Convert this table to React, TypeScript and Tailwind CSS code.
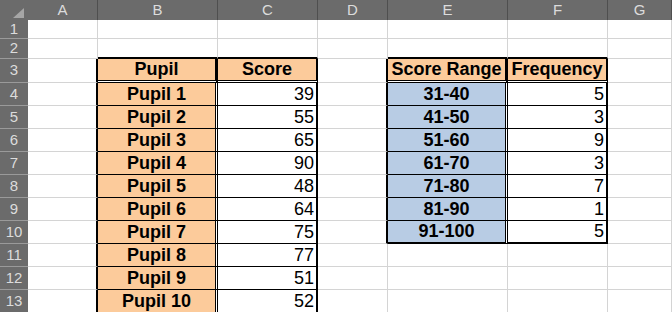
import React from "react";

const COLS = ["A", "B", "C", "D", "E", "F", "G"];

const pupils: [string, number][] = [
  ["Pupil 1", 39],
  ["Pupil 2", 55],
  ["Pupil 3", 65],
  ["Pupil 4", 90],
  ["Pupil 5", 48],
  ["Pupil 6", 64],
  ["Pupil 7", 75],
  ["Pupil 8", 77],
  ["Pupil 9", 51],
  ["Pupil 10", 52],
];

const ranges: [string, number][] = [
  ["31-40", 5],
  ["41-50", 3],
  ["51-60", 9],
  ["61-70", 3],
  ["71-80", 7],
  ["81-90", 1],
  ["91-100", 5],
];

// col: 1=A ... 7=G, row: 1..13
const rightBorder = (col: number, row: number) => {
  if (col === 1 && row >= 3) return "border-r-2 border-r-black";
  if (col === 2 && row === 3) return "border-r-[3px] border-r-black";
  if (col === 2 && row >= 4) return "border-r-[3px] border-r-black [border-right-style:double]";
  if (col === 3 && row >= 3) return "border-r-2 border-r-black";
  if (col === 4 && row >= 3 && row <= 10) return "border-r-2 border-r-black";
  if (col === 5 && row === 3) return "border-r-[3px] border-r-black";
  if (col === 5 && row >= 4 && row <= 10) return "border-r-[3px] border-r-black [border-right-style:double]";
  if (col === 6 && row >= 3 && row <= 10) return "border-r-2 border-r-black";
  return "border-r border-r-[#d4d4d4]";
};

const bottomBorder = (col: number, row: number) => {
  const left = col === 2 || col === 3;
  const right = col === 5 || col === 6;
  if ((left || right) && row === 2) return "border-b-2 border-b-black";
  if ((left || right) && row === 3) return "border-b-[3px] border-b-black [border-bottom-style:double]";
  if (left && row >= 4) return "border-b border-b-black";
  if (right && row >= 4 && row <= 9) return "border-b border-b-black";
  if (right && row === 10) return "border-b-2 border-b-black";
  return "border-b border-b-[#d4d4d4]";
};

const cellContent = (col: number, row: number) => {
  if (row === 3) {
    if (col === 2) return { text: "Pupil", bg: "bg-[#fccb9b]", bold: true, right: false };
    if (col === 3) return { text: "Score", bg: "bg-[#fccb9b]", bold: true, right: false };
    if (col === 5) return { text: "Score Range", bg: "bg-[#fccb9b]", bold: true, right: false };
    if (col === 6) return { text: "Frequency", bg: "bg-[#fccb9b]", bold: true, right: false };
  }
  if (row >= 4 && row <= 13) {
    const p = pupils[row - 4];
    if (col === 2) return { text: p[0], bg: "bg-[#fccb9b]", bold: true, right: false };
    if (col === 3) return { text: String(p[1]), bg: "bg-white", bold: false, right: true };
  }
  if (row >= 4 && row <= 10) {
    const r = ranges[row - 4];
    if (col === 5) return { text: r[0], bg: "bg-[#b8cce4]", bold: true, right: false };
    if (col === 6) return { text: String(r[1]), bg: "bg-white", bold: false, right: true };
  }
  return null;
};

const Corner = () => (
  <div className="bg-[#6b6b6b] flex items-end justify-end pr-[4px] pb-[2px]">
    <svg width="11" height="10" viewBox="0 0 11 10">
      <polygon points="11,0 11,10 0,10" fill="#a6a6a6" />
    </svg>
  </div>
);

export default function App() {
  const rows = Array.from({ length: 13 }, (_, i) => i + 1);
  return (
    <div className="w-[672px] h-[312px] overflow-hidden bg-white font-['Liberation_Sans',Arial,sans-serif]">
      <div className="grid grid-cols-[28px_70px_120px_100px_70px_120px_100px_1fr] grid-rows-[20px_19px_20px_24px_repeat(10,23px)] bg-white">
        <Corner />
        {COLS.map((c) => (
          <div
            key={c}
            className="bg-[#6b6b6b] border-r border-r-[#4f4f4f] flex items-center justify-center text-[15px] text-[#dcdcdc]"
          >
            {c}
          </div>
        ))}
        {rows.map((row) => (
          <React.Fragment key={row}>
            <div className="bg-[#6b6b6b] border-b border-b-[#9a9a9a] flex items-center justify-center text-[15px] text-[#dcdcdc]">
              {row}
            </div>
            {COLS.map((_, i) => {
              const col = i + 1;
              const c = cellContent(col, row);
              return (
                <div
                  key={col}
                  className={`${rightBorder(col, row)} ${bottomBorder(col, row)} ${
                    c ? `${c.bg} bg-clip-padding` : "bg-white"
                  } flex items-center overflow-hidden whitespace-nowrap text-[18px] text-black ${
                    c && c.right ? "justify-end pr-[2px]" : "justify-center"
                  } ${c && c.bold ? "font-bold" : ""}`}
                >
                  {c ? c.text : null}
                </div>
              );
            })}
          </React.Fragment>
        ))}
      </div>
    </div>
  );
}
